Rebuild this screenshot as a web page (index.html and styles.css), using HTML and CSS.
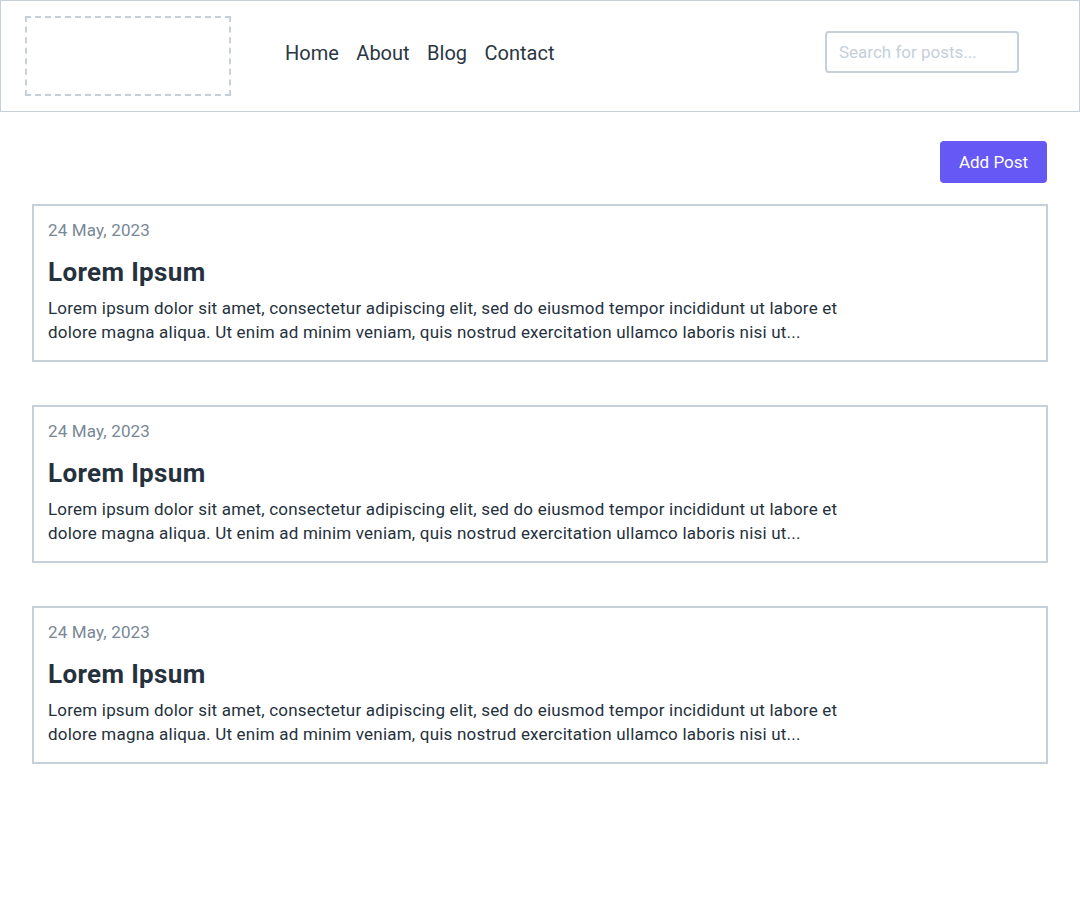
FILE: index.html
```html
<!DOCTYPE html>
<html lang="en">
<head>
<meta charset="utf-8">
<title>Blog</title>
<link rel="stylesheet" href="styles.css">
</head>
<body>
<header class="header">
  <div class="logo"></div>
  <nav class="nav">
    <a href="#">Home</a>
    <a href="#">About</a>
    <a href="#">Blog</a>
    <a href="#">Contact</a>
  </nav>
  <input class="search" type="text" placeholder="Search for posts...">
</header>
<main class="main">
  <div class="actions"><button class="btn">Add Post</button></div>
  <article class="card">
    <div class="date">24 May, 2023</div>
    <h2 class="title">Lorem Ipsum</h2>
    <p class="excerpt">Lorem ipsum dolor sit amet, consectetur adipiscing elit, sed do eiusmod tempor incididunt ut labore et dolore magna aliqua. Ut enim ad minim veniam, quis nostrud exercitation ullamco laboris nisi ut...</p>
  </article>
  <article class="card">
    <div class="date">24 May, 2023</div>
    <h2 class="title">Lorem Ipsum</h2>
    <p class="excerpt">Lorem ipsum dolor sit amet, consectetur adipiscing elit, sed do eiusmod tempor incididunt ut labore et dolore magna aliqua. Ut enim ad minim veniam, quis nostrud exercitation ullamco laboris nisi ut...</p>
  </article>
  <article class="card">
    <div class="date">24 May, 2023</div>
    <h2 class="title">Lorem Ipsum</h2>
    <p class="excerpt">Lorem ipsum dolor sit amet, consectetur adipiscing elit, sed do eiusmod tempor incididunt ut labore et dolore magna aliqua. Ut enim ad minim veniam, quis nostrud exercitation ullamco laboris nisi ut...</p>
  </article>
</main>
</body>
</html>
```
FILE: styles.css
```css
* { box-sizing: border-box; }
html, body { margin: 0; padding: 0; background: #fff; }
body {
  font-family: Roboto, "Liberation Sans", sans-serif;
  color: #25313d;
}
.header {
  height: 112px;
  border: 1px solid #c5d0da;
  display: flex;
  align-items: center;
  padding: 0 0 0 24px;
}
.logo {
  width: 206px;
  height: 80px;
  border: 2px dashed #c5d0da;
  margin-top: -1px;
}
.nav {
  display: flex;
  gap: 17.5px;
  margin-left: 54px;
  margin-top: -6px;
}
.nav a {
  font-size: 20px;
  color: #2a3643;
  text-decoration: none;
}
.search {
  margin-left: auto;
  margin-right: 60px;
  margin-top: -8px;
  width: 194px;
  height: 42px;
  border: 2px solid #c5d0da;
  border-radius: 4px;
  padding: 0 12px;
  font-family: inherit;
  font-size: 17px;
  color: #25313d;
  outline: none;
}
.search::placeholder { color: #c5d0da; }
.main {
  padding: 29px 32px 0 32px;
}
.actions {
  display: flex;
  justify-content: flex-end;
  margin-bottom: 21px;
}
.btn {
  width: 107px;
  height: 42px;
  margin-right: 1px;
  background: #6558f5;
  color: #fff;
  border: none;
  border-radius: 4px;
  font-family: inherit;
  font-size: 17px;
  cursor: pointer;
}
.card {
  border: 2px solid #c5d0da;
  padding: 12px 14px 14px;
  height: 158px;
  margin-bottom: 43px;
}
.date {
  font-size: 17px;
  line-height: 24px;
  color: #788896;
  letter-spacing: 0.15px;
}
.title {
  margin: 14px 0 8px;
  font-size: 26px;
  line-height: 32px;
  font-weight: 700;
  color: #25313d;
  letter-spacing: 0.35px;
}
.excerpt {
  margin: 0;
  max-width: 820px;
  font-size: 17px;
  line-height: 24px;
  color: #25313d;
  letter-spacing: 0.2px;
}
```
